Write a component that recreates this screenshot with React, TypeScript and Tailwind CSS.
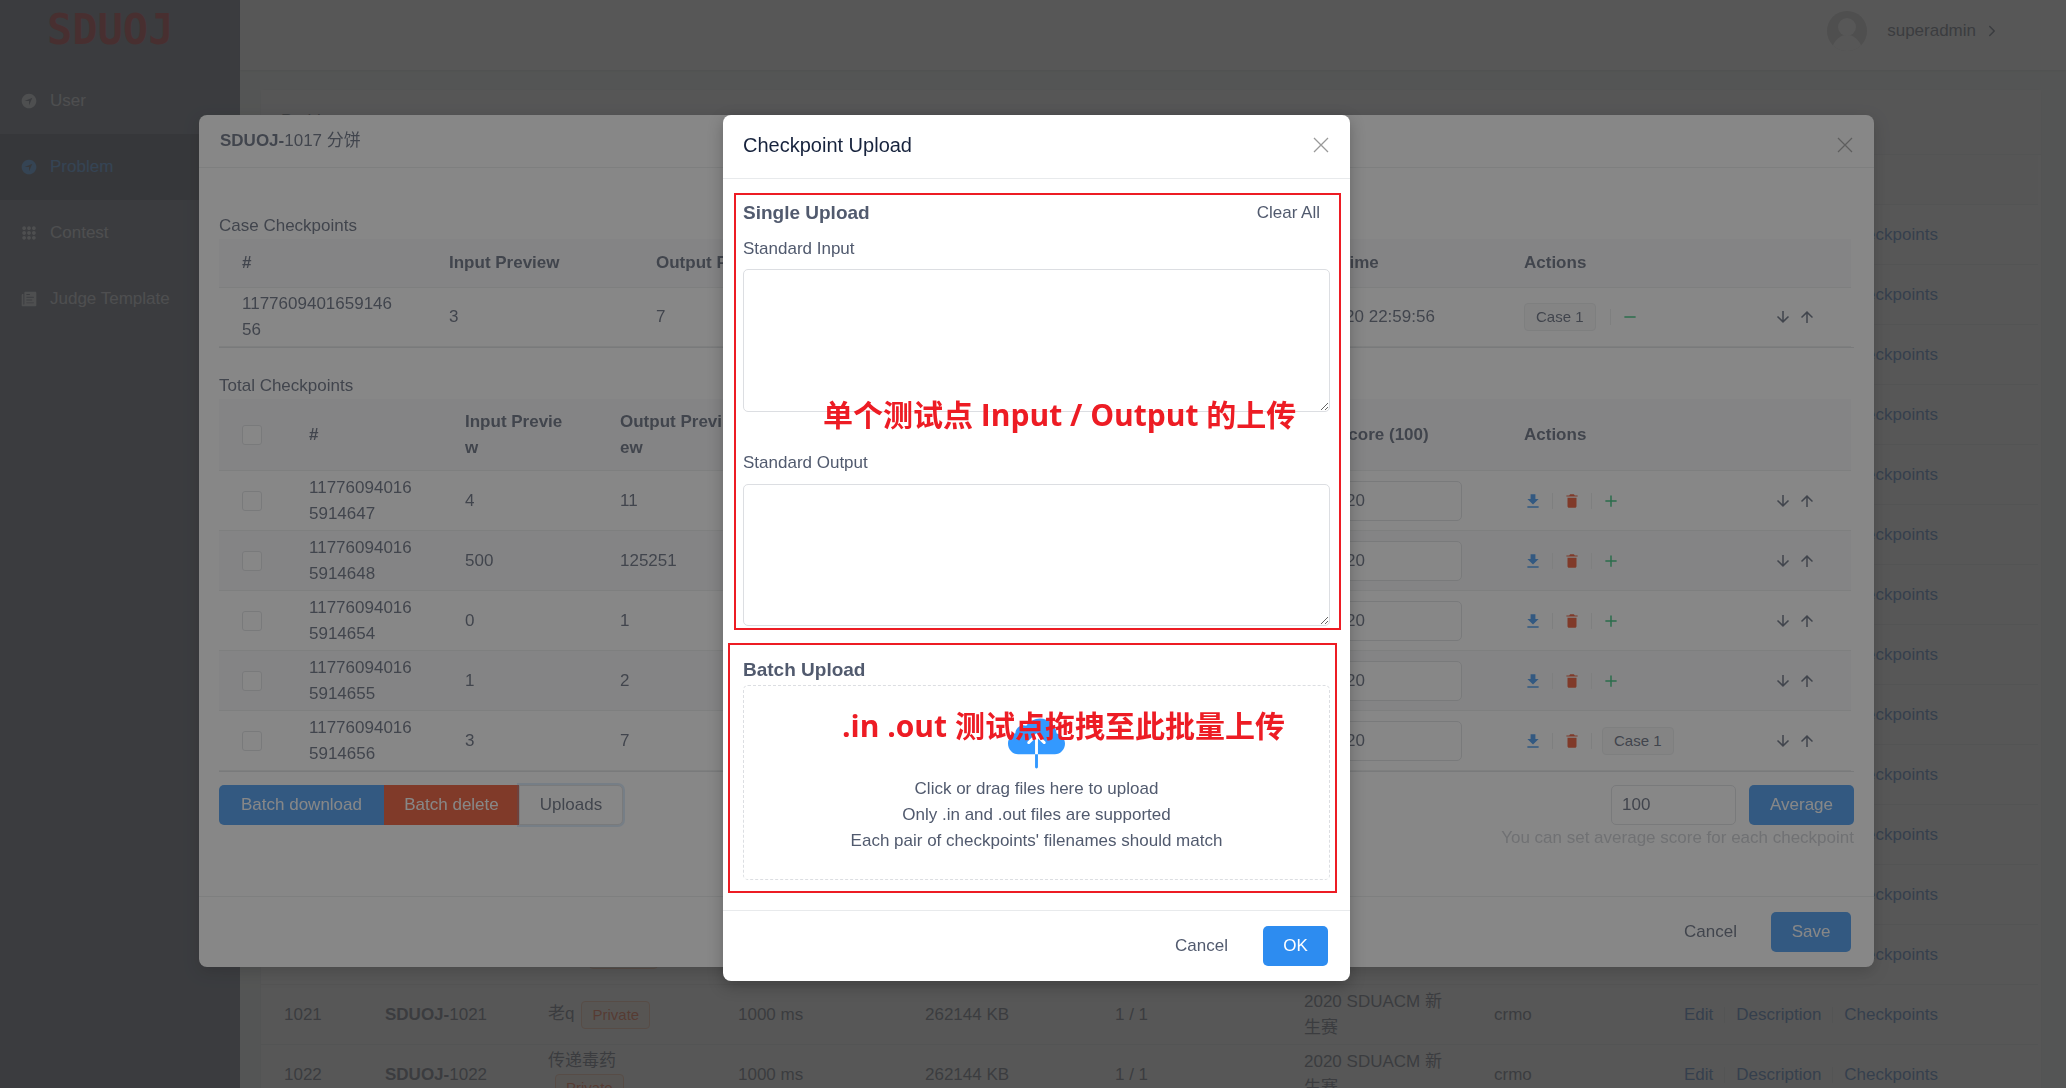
import React from "react";
import {
  IoIosArrowForward,
  IoIosCloudUpload,
  IoIosKeypad,
  IoIosNavigate,
  IoIosPaper,
  IoMdAdd,
  IoMdArrowDown,
  IoMdArrowUp,
  IoMdDownload,
  IoMdRemove,
  IoMdTrash,
} from "react-icons/io";

const menu = [
  { label: "User", Icon: IoIosNavigate, active: false },
  { label: "Problem", Icon: IoIosNavigate, active: true },
  { label: "Contest", Icon: IoIosKeypad, active: false },
  { label: "Judge Template", Icon: IoIosPaper, active: false },
];

const problemNames: Record<number, string> = {
  1017: "分饼",
  1020: "分饼",
  1021: "老q",
  1022: "传递毒药",
};

const problems = Array.from({ length: 15 }, (_, i) => 1008 + i);

const checkpoints = [
  { id: "117760940165914647", input: "4", output: "11", inCase: false },
  { id: "117760940165914648", input: "500", output: "125251", inCase: false },
  { id: "117760940165914654", input: "0", output: "1", inCase: false },
  { id: "117760940165914655", input: "1", output: "2", inCase: false },
  { id: "117760940165914656", input: "3", output: "7", inCase: true },
];

const cell = "border-b border-[#e8eaec] pl-[23px] pr-7 text-left break-all";
const head = "bg-[#f8f8f9] font-bold " + cell;
const primary = "h-10 rounded-[5px] bg-[#2d8cf0] text-white";

function Divider() {
  return <span className="mx-[10px] h-4 w-px shrink-0 bg-[#e8eaec]" />;
}

function CaseTag() {
  return (
    <span className="flex h-7 items-center rounded-[4px] border border-[#e8eaec] bg-[#f7f7f7] px-[11px] text-[15px]">
      Case 1
    </span>
  );
}

function MoveButtons() {
  return (
    <span className="mr-[35px] ml-auto flex gap-[6px]">
      <button type="button" aria-label="Move down">
        <IoMdArrowDown size={18} />
      </button>
      <button type="button" aria-label="Move up">
        <IoMdArrowUp size={18} />
      </button>
    </span>
  );
}

function CheckBox({ label }: { label: string }) {
  return (
    <input
      type="checkbox"
      aria-label={label}
      className="block size-5 appearance-none rounded-[3px] border border-[#dcdee2] bg-white"
    />
  );
}

function Sidebar() {
  return (
    <aside className="w-[240px] shrink-0 bg-[#515a6e]">
      <div className="flex h-[68px] items-start pt-[9px] pl-[47px] font-['DejaVu_Sans_Mono'] text-[42px] leading-[42px] font-bold text-[#a00c10]">
        SDUOJ
      </div>
      <nav>
        {menu.map(({ label, Icon, active }) => (
          <a
            key={label}
            href="#"
            className={
              active
                ? "flex h-[66px] items-center gap-3 bg-[#363e4f] pl-5 text-[#2d8cf0]"
                : "flex h-[66px] items-center gap-3 pl-5 text-white/70"
            }
          >
            <Icon size={18} />
            {label}
          </a>
        ))}
      </nav>
    </aside>
  );
}

function TopBar() {
  return (
    <header className="relative flex h-[70px] items-start justify-end bg-white pt-[11px] pr-[66px] shadow-[0_1px_2px_rgba(0,0,0,0.12)]">
      <svg viewBox="0 0 40 40" className="size-10">
        <defs>
          <clipPath id="avatar">
            <circle cx="20" cy="20" r="20" />
          </clipPath>
        </defs>
        <g clipPath="url(#avatar)">
          <rect width="40" height="40" fill="#ccc" />
          <circle cx="20" cy="16" r="9" fill="#fff" />
          <path d="M6 34C10 27 14 24 20 24s10 3 14 10v8H6z" fill="#fff" />
        </g>
      </svg>
      <button type="button" className="ml-5 flex h-10 items-center gap-2">
        superadmin
        <IoIosArrowForward size={16} />
      </button>
    </header>
  );
}

function ProblemTable() {
  const th = "h-[50px] border-b border-[#e8eaec] bg-[#fdfdfd] pl-[23px] text-left font-bold";
  const td = "h-[60px] border-b border-[#e8eaec] pl-[23px] pr-5";
  return (
    <section className="mt-[19px] mr-6 ml-5 rounded-[5px] border border-[#e8eaec] bg-white">
      <h1 className="flex h-[65px] items-start border-b border-[#e8eaec] bg-[#f8f8f9] px-5 pt-[18px]">Problem</h1>
      <div className="pr-[3px]">
        <table className="w-full table-fixed border-separate border-spacing-0">
          <colgroup>
            <col className="w-[101px]" />
            <col className="w-[163px]" />
            <col className="w-[190px]" />
            <col className="w-[187px]" />
            <col className="w-[190px]" />
            <col className="w-[189px]" />
            <col className="w-[190px]" />
            <col className="w-[190px]" />
            <col />
          </colgroup>
          <thead>
            <tr>
              {["#", "Code", "Title", "Time", "Memory", "Accepted", "Source", "Author", "Actions"].map((t) => (
                <th key={t} className={th}>
                  {t}
                </th>
              ))}
            </tr>
          </thead>
          <tbody>
            {problems.map((id) => (
              <tr key={id}>
                <td className={td}>{id}</td>
                <td className={td}>
                  <b>SDUOJ-</b>
                  {id}
                </td>
                <td className="h-[60px] border-b border-[#e8eaec] pr-7 pl-[23px]">
                  {problemNames[id]}
                  <span className="ml-[7px] inline-block h-7 rounded-[4px] border border-[#ffbb96] bg-[#fff2e8] px-[10px] align-middle text-[15px] leading-[26px] text-[#fa541c]">
                    Private
                  </span>
                </td>
                <td className={td}>1000 ms</td>
                <td className={td}>262144 KB</td>
                <td className={td}>1 / 1</td>
                <td className={td}>2020 SDUACM 新生赛</td>
                <td className={td}>crmo</td>
                <td className={td}>
                  <div className="flex items-center gap-px text-[#2d6cc0]">
                    <a href="#">Edit</a>
                    <Divider />
                    <a href="#">Description</a>
                    <Divider />
                    <a href="#">Checkpoints</a>
                  </div>
                </td>
              </tr>
            ))}
          </tbody>
        </table>
      </div>
    </section>
  );
}

function CloseButton() {
  return (
    <button type="button" aria-label="Close" className="flex size-10 items-center justify-center text-[#999]">
      <svg viewBox="0 0 16 16" className="size-4" fill="none" stroke="currentColor" strokeWidth="1.3">
        <path d="M1 1l14 14M15 1L1 15" />
      </svg>
    </button>
  );
}

function CaseTable() {
  return (
    <div className="pr-[3px] shadow-[0_1px_0_#dcdee2]">
      <table className="w-full table-fixed border-separate border-spacing-0">
        <colgroup>
          <col className="w-[207px]" />
          <col className="w-[207px]" />
          <col className="w-[207px]" />
          <col className="w-[207px]" />
          <col className="w-[207px]" />
          <col className="w-[247px]" />
          <col className="w-[350px]" />
        </colgroup>
        <thead>
          <tr className="h-[49px]">
            {["#", "Input Preview", "Output Preview", "Input Size", "Output Size", "Upload Time", "Actions"].map((t) => (
              <th key={t} className={head}>
                {t}
              </th>
            ))}
          </tr>
        </thead>
        <tbody>
          <tr className="h-[59px]">
            <td className={cell}>117760940165914656</td>
            <td className={cell}>3</td>
            <td className={cell}>7</td>
            <td className={cell}>2</td>
            <td className={cell}>2</td>
            <td className="border-b border-[#e8eaec] pl-[23px]">2020-10-20 22:59:56</td>
            <td className="border-b border-[#e8eaec] pl-[23px]">
              <div className="flex items-center">
                <CaseTag />
                <span className="w-1" />
                <Divider />
                <button type="button" aria-label="Remove from case" className="text-[#19be6b]">
                  <IoMdRemove size={18} />
                </button>
                <MoveButtons />
              </div>
            </td>
          </tr>
        </tbody>
      </table>
    </div>
  );
}

function CheckpointTable() {
  return (
    <div className="pr-[3px] shadow-[0_1px_0_#dcdee2]">
      <table className="w-full table-fixed border-separate border-spacing-0">
        <colgroup>
          <col className="w-[67px]" />
          <col className="w-[156px]" />
          <col className="w-[155px]" />
          <col className="w-[155px]" />
          <col className="w-[155px]" />
          <col className="w-[155px]" />
          <col className="w-[252px]" />
          <col className="w-[187px]" />
          <col className="w-[350px]" />
        </colgroup>
        <thead>
          <tr className="h-[72px]">
            <th className="border-b border-[#e8eaec] bg-[#f8f8f9] pl-[23px]">
              <CheckBox label="Select all" />
            </th>
            {["#", "Input Preview", "Output Preview", "Input Size", "Output Size", "Upload Time", "Score (100)", "Actions"].map(
              (t) => (
                <th key={t} className={head}>
                  {t}
                </th>
              ),
            )}
          </tr>
        </thead>
        <tbody>
          {checkpoints.map((c) => (
            <tr key={c.id} className="h-[60px] even:bg-[#f8f8f9]">
              <td className="border-b border-[#e8eaec] pl-[23px]">
                <CheckBox label={"Select " + c.id} />
              </td>
              <td className="border-b border-[#e8eaec] pr-6 pl-[23px] break-all">{c.id}</td>
              <td className={cell}>{c.input}</td>
              <td className={cell}>{c.output}</td>
              <td className={cell}>2</td>
              <td className={cell}>2</td>
              <td className={cell}>2020-10-20 22:59:56</td>
              <td className="border-b border-[#e8eaec] pl-[23px]">
                <input
                  aria-label={"Score of " + c.id}
                  defaultValue="20"
                  className="block h-10 w-[125px] rounded-[5px] border border-[#dcdee2] bg-white px-2"
                />
              </td>
              <td className="border-b border-[#e8eaec] pl-[23px]">
                <div className="flex items-center">
                  <button type="button" aria-label="Download" className="text-[#2d8cf0]">
                    <IoMdDownload size={18} />
                  </button>
                  <Divider />
                  <button type="button" aria-label="Delete" className="text-[#ed4014]">
                    <IoMdTrash size={18} />
                  </button>
                  <Divider />
                  {c.inCase ? (
                    <CaseTag />
                  ) : (
                    <button type="button" aria-label="Add to case" className="text-[#19be6b]">
                      <IoMdAdd size={18} />
                    </button>
                  )}
                  <MoveButtons />
                </div>
              </td>
            </tr>
          ))}
        </tbody>
      </table>
    </div>
  );
}

function CheckpointsModal() {
  return (
    <div className="fixed inset-0 overflow-hidden bg-[rgba(55,55,55,0.6)] pt-[115px] pl-[7px]">
      <div
        role="dialog"
        aria-label="Checkpoints"
        className="mx-auto w-full max-w-[1675px] rounded-lg bg-white shadow-[0_5px_15px_rgba(0,0,0,0.25)]"
      >
        <div className="flex h-[53px] items-center justify-between border-b border-[#e8eaec] pr-[9px] pl-[21px]">
          <h2>
            <b>SDUOJ-</b>1017 分饼
          </h2>
          <div className="pt-2">
            <CloseButton />
          </div>
        </div>
        <div className="px-5 pt-[45px] pb-[45px]">
          <h3>Case Checkpoints</h3>
          <CaseTable />
          <h3 className="mt-[26px]">Total Checkpoints</h3>
          <CheckpointTable />
          <div className="mt-[14px] flex items-start justify-between">
            <div className="flex">
              <button type="button" className="h-10 w-[165px] rounded-l-[5px] bg-[#2d8cf0] text-white">
                Batch download
              </button>
              <button type="button" className="h-10 w-[135px] bg-[#ed4014] text-white">
                Batch delete
              </button>
              <button
                type="button"
                className="h-10 w-[104px] rounded-r-[5px] border border-[#dcdee2] bg-white shadow-[0_0_0_2px_rgba(45,140,240,0.2)]"
              >
                Uploads
              </button>
            </div>
            <div className="text-right">
              <div className="flex justify-end gap-[13px]">
                <input
                  aria-label="Average score"
                  defaultValue="100"
                  className="h-10 w-[125px] rounded-[5px] border border-[#dcdee2] bg-white px-[10px]"
                />
                <button type="button" className={primary + " w-[105px]"}>
                  Average
                </button>
              </div>
              <p className="text-[#c5c8ce]">You can set average score for each checkpoint</p>
            </div>
          </div>
        </div>
        <div className="flex justify-end gap-[14px] border-t border-[#e8eaec] py-[15px] pr-[23px]">
          <button type="button" className="h-10 px-5">
            Cancel
          </button>
          <button type="button" className={primary + " w-20"}>
            Save
          </button>
        </div>
      </div>
    </div>
  );
}

function UploadModal() {
  const area = "block w-full resize-y rounded-[5px] border border-[#dcdee2] bg-white px-2 py-1";
  const note =
    "pointer-events-none absolute border-2 border-[#ed1c24] font-['Open_Sans','Noto_Sans_CJK_SC',sans-serif] text-[30px] leading-10 font-bold whitespace-nowrap text-[#ed1c24]";
  return (
    <div className="fixed inset-0 overflow-hidden bg-[rgba(55,55,55,0.6)] pt-[115px] pl-[7px]">
      <div
        role="dialog"
        aria-label="Checkpoint Upload"
        className="mx-auto w-full max-w-[627px] rounded-lg bg-white shadow-[0_5px_15px_rgba(0,0,0,0.25)]"
      >
        <div className="flex h-16 items-center justify-between border-b border-[#e8eaec] pr-[9px] pb-1 pl-5">
          <h2 className="text-xl text-[#17233d]">Checkpoint Upload</h2>
          <CloseButton />
        </div>
        <div className="relative px-5 pt-[21px] pb-[30px]">
          <div className="flex items-center justify-between pr-[10px]">
            <h3 className="text-[19px] font-bold">Single Upload</h3>
            <button type="button">Clear All</button>
          </div>
          <label htmlFor="std-in" className="mt-[10px] mb-[7px] block">
            Standard Input
          </label>
          <textarea id="std-in" className={area + " h-[143px]"} />
          <label htmlFor="std-out" className="mt-[38px] mb-2 block">
            Standard Output
          </label>
          <textarea id="std-out" className={area + " h-[142px]"} />
          <h3 className="mt-[31px] mb-[2px] text-[19px] font-bold">Batch Upload</h3>
          <label className="flex flex-col items-center rounded-[5px] border border-dashed border-[#dcdee2] pt-[29px] pb-[25px] text-center">
            <input type="file" multiple accept=".in,.out" className="sr-only" />
            <IoIosCloudUpload size={57} className="mb-1 text-[#3399ff]" />
            <span>Click or drag files here to upload</span>
            <span>Only .in and .out files are supported</span>
            <span>Each pair of checkpoints' filenames should match</span>
          </label>
          <div className={note + " top-[14px] right-[9px] left-[11px] h-[437px] pt-[200px] pl-[87px]"}>
            单个测试点 Input / Output 的上传
          </div>
          <div className={note + " top-[464px] right-[13px] left-[5px] h-[250px] pt-[61px] pl-[112px]"}>
            .in .out 测试点拖拽至此批量上传
          </div>
        </div>
        <div className="flex justify-end gap-[15px] border-t border-[#e8eaec] py-[15px] pr-[22px]">
          <button type="button" className="h-10 px-5">
            Cancel
          </button>
          <button type="button" className={primary + " w-[65px]"}>
            OK
          </button>
        </div>
      </div>
    </div>
  );
}

export default function App() {
  return (
    <div className="flex h-screen overflow-hidden bg-[#eef5f2] font-['Liberation_Sans','Noto_Sans_CJK_SC',sans-serif] text-[17px] leading-[26px] text-[#515a6e]">
      <Sidebar />
      <main className="min-w-0 flex-1">
        <TopBar />
        <ProblemTable />
      </main>
      <CheckpointsModal />
      <UploadModal />
    </div>
  );
}
